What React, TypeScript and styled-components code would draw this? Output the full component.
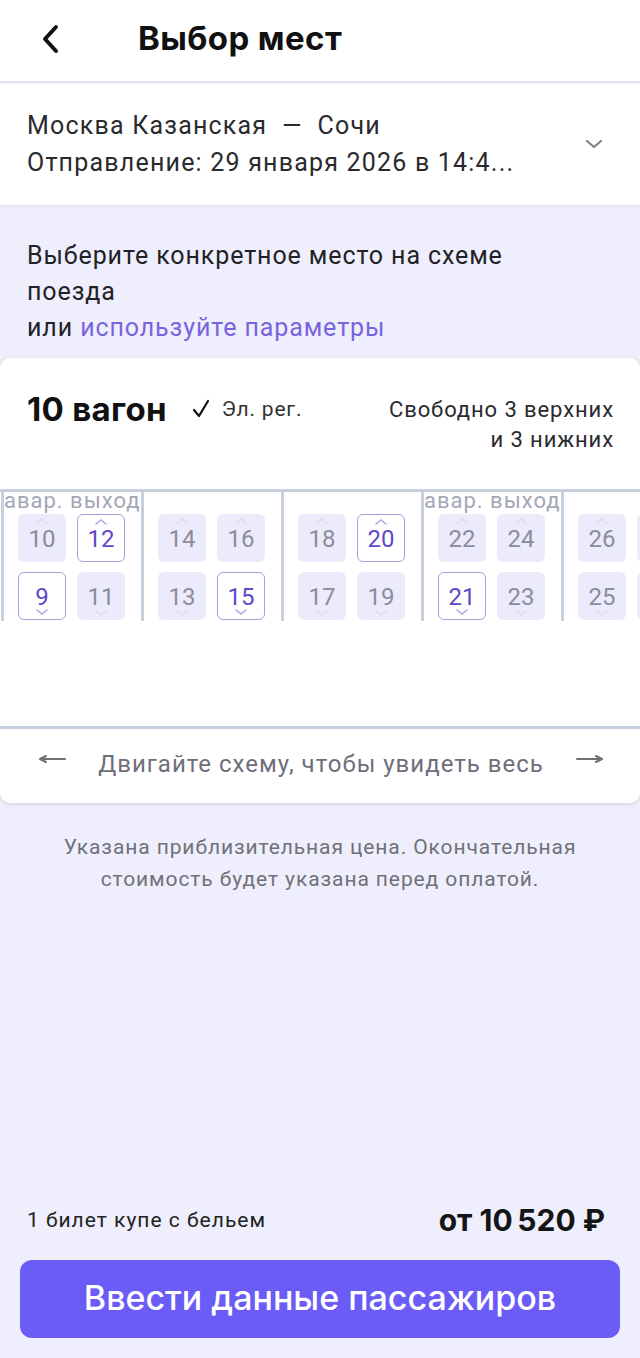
import React from "react";
import styled, { createGlobalStyle } from "styled-components";

const GlobalStyle = createGlobalStyle`
  html, body {
    margin: 0;
    padding: 0;
    background: #eeeefc;
  }
  body {
    font-family: Roboto, "Noto Sans", "Liberation Sans", sans-serif;
    color: #1b1b1f;
  }
  * {
    box-sizing: border-box;
  }
`;

const heading = `Inter, Roboto, "Noto Sans", sans-serif`;

const Page = styled.div`
  width: 640px;
  min-height: 1358px;
  display: flex;
  flex-direction: column;
  background: #eeeefc;
  overflow: hidden;
`;

const Header = styled.header`
  height: 81px;
  display: flex;
  align-items: center;
  background: #fff;
  box-shadow: 0 2px 3px rgba(0, 0, 0, 0.08);
  position: relative;
  z-index: 2;
`;

const BackButton = styled.button`
  width: 110px;
  height: 81px;
  border: 0;
  background: none;
  padding: 0 0 4px 38px;
  display: flex;
  align-items: center;
  color: #111;
`;

const Title = styled.h1`
  margin: 0 0 6px 28px;
  font-family: ${heading};
  font-size: 33px;
  font-weight: 700;
  letter-spacing: 0.4px;
  color: #111;
`;

const RouteBar = styled.div`
  background: #fff;
  margin-top: 2px;
  padding: 24px 36px 24px 27px;
  display: flex;
  align-items: center;
  justify-content: space-between;
  box-shadow: 0 2px 3px rgba(0, 0, 0, 0.05);
`;

const RouteText = styled.div`
  font-size: 25px;
  line-height: 37px;
  letter-spacing: 1.2px;
  color: #2a2a2e;
`;

const Hint = styled.p`
  margin: 0;
  padding: 33px 60px 12px 27px;
  font-size: 25px;
  line-height: 36px;
  letter-spacing: 0.9px;
  color: #222226;
`;

const Link = styled.span`
  color: #7a63e0;
`;

const Card = styled.section`
  background: #fff;
  border-radius: 10px;
  box-shadow: 0 1px 4px rgba(0, 0, 0, 0.12);
  overflow: hidden;
`;

const CardHead = styled.div`
  height: 131px;
  padding: 32px 26px 0 27px;
  display: flex;
  align-items: flex-start;
`;

const WagonNo = styled.div`
  font-family: ${heading};
  font-size: 33px;
  font-weight: 700;
  line-height: 38px;
  letter-spacing: 0.3px;
  color: #111;
`;

const Reg = styled.div`
  margin-left: 24px;
  font-size: 21px;
  line-height: 38px;
  letter-spacing: 0.8px;
  color: #333;
  display: flex;
  align-items: center;
  gap: 11px;
`;

const Free = styled.div`
  margin-left: auto;
  text-align: right;
  font-size: 22px;
  line-height: 30px;
  letter-spacing: 0.9px;
  padding-top: 5px;
  color: #2a2a2e;
`;

const SeatMap = styled.div`
  height: 240px;
  border-top: 3px solid #c6d0dc;
  border-bottom: 3px solid #c6d0dc;
  overflow: hidden;
  display: flex;
  padding-left: 1px;
`;

const Compartment = styled.div`
  flex: 0 0 140px;
  height: 129px;
  border-left: 3px solid #c6d0dc;
  display: flex;
  flex-direction: column;
`;

const ExitLabel = styled.div<{ $show: boolean }>`
  height: 22px;
  font-size: 22px;
  line-height: 17px;
  letter-spacing: 1px;
  color: #a3a7b6;
  white-space: nowrap;
  visibility: ${(p) => (p.$show ? "visible" : "hidden")};
`;

const Seats = styled.div`
  display: grid;
  grid-template-columns: 48px 48px;
  grid-auto-rows: 48px;
  column-gap: 11px;
  row-gap: 10px;
  padding-left: 14px;
`;

const Seat = styled.div<{ $free: boolean }>`
  position: relative;
  display: flex;
  align-items: center;
  justify-content: center;
  border-radius: 6px;
  font-size: 24px;
  padding-top: 2px;
  background: ${(p) => (p.$free ? "#fff" : "#ebebfb")};
  border: ${(p) => (p.$free ? "1.5px solid #a89fdb" : "0")};
  color: ${(p) => (p.$free ? "#5f48cc" : "#8c8ca0")};
`;

const Mark = styled.svg<{ $bottom: boolean; $free: boolean }>`
  position: absolute;
  left: 50%;
  margin-left: -7px;
  ${(p) => (p.$bottom ? "bottom: 3px;" : "top: 3px;")}
  color: ${(p) => (p.$free ? "#b0a6e6" : "#dcdcf2")};
`;

const ScrollHint = styled.div`
  height: 74px;
  display: flex;
  align-items: center;
  justify-content: space-between;
  padding: 0 36px 4px 38px;
  font-size: 24px;
  letter-spacing: 1px;
  color: #6e6e7a;

  svg {
    margin-top: -10px;
  }
`;

const Note = styled.p`
  margin: 0;
  padding: 28px 40px 0;
  text-align: center;
  font-size: 21px;
  line-height: 32px;
  letter-spacing: 0.9px;
  color: #717178;
`;

const Footer = styled.footer`
  margin-top: auto;
  padding: 0 20px 20px;
`;

const PriceRow = styled.div`
  display: flex;
  align-items: center;
  justify-content: space-between;
  padding: 0 15px 0 7px;
  height: 44px;
  margin-bottom: 18px;
`;

const Ticket = styled.span`
  font-size: 21px;
  letter-spacing: 1px;
  color: #222;
`;

const Price = styled.span`
  font-family: ${heading};
  font-size: 30px;
  font-weight: 700;
  color: #151515;
`;

const SubmitButton = styled.button`
  width: 100%;
  height: 78px;
  border: 0;
  border-radius: 12px;
  background: #6b5cf7;
  color: #fff;
  font-family: ${heading};
  font-size: 34px;
  font-weight: 500;
  padding-bottom: 4px;
`;

type SeatInfo = { n: number; free?: boolean };

const compartments: { exit?: boolean; top: SeatInfo[]; bottom: SeatInfo[] }[] = [
  { exit: true, top: [{ n: 10 }, { n: 12, free: true }], bottom: [{ n: 9, free: true }, { n: 11 }] },
  { top: [{ n: 14 }, { n: 16 }], bottom: [{ n: 13 }, { n: 15, free: true }] },
  { top: [{ n: 18 }, { n: 20, free: true }], bottom: [{ n: 17 }, { n: 19 }] },
  { exit: true, top: [{ n: 22 }, { n: 24 }], bottom: [{ n: 21, free: true }, { n: 23 }] },
  { top: [{ n: 26 }, { n: 28 }], bottom: [{ n: 25 }, { n: 27 }] },
];

// seats past the right edge of the screen are only partly visible, so no label is drawn
const visibleEdge = 27;

const SeatBox: React.FC<{ seat: SeatInfo; lower: boolean }> = ({ seat, lower }) => (
  <Seat $free={!!seat.free} aria-label={`Место ${seat.n}`}>
    <Mark $bottom={lower} $free={!!seat.free} width="14" height="8" viewBox="0 0 14 8">
      <path
        d={lower ? "M2 2l5 4 5-4" : "M2 6l5-4 5 4"}
        fill="none"
        stroke="currentColor"
        strokeWidth="1.6"
        strokeLinecap="round"
      />
    </Mark>
    {seat.n < visibleEdge ? seat.n : null}
  </Seat>
);

const App: React.FC = () => {
  return (
    <Page>
      <GlobalStyle />
      <Header>
        <BackButton aria-label="Назад">
          <svg width="24" height="30" viewBox="0 0 24 30">
            <path d="M18 3L7 15l11 12" fill="none" stroke="currentColor" strokeWidth="4" strokeLinecap="round" strokeLinejoin="round" />
          </svg>
        </BackButton>
        <Title>Выбор мест</Title>
      </Header>

      <RouteBar>
        <RouteText>
          Москва Казанская&nbsp; —&nbsp; Сочи
          <br />
          Отправление: 29 января 2026 в 14:4...
        </RouteText>
        <svg width="20" height="12" viewBox="0 0 20 12">
          <path d="M3 3l7 6 7-6" fill="none" stroke="#808088" strokeWidth="2.2" strokeLinecap="round" strokeLinejoin="round" />
        </svg>
      </RouteBar>

      <Hint>
        Выберите конкретное место на схеме поезда
        <br />
        или <Link>используйте параметры</Link>
      </Hint>

      <Card>
        <CardHead>
          <WagonNo>10 вагон</WagonNo>
          <Reg>
            <svg width="20" height="22" viewBox="0 0 20 22">
              <path d="M3 12l5 6L17 3" fill="none" stroke="#111" strokeWidth="2.2" strokeLinecap="round" strokeLinejoin="round" />
            </svg>
            Эл. рег.
          </Reg>
          <Free>
            Свободно 3 верхних
            <br />и 3 нижних
          </Free>
        </CardHead>

        <SeatMap>
          {compartments.map((c, i) => (
            <Compartment key={i}>
              <ExitLabel $show={!!c.exit}>авар. выход</ExitLabel>
              <Seats>
                {c.top.map((s) => (
                  <SeatBox key={s.n} seat={s} lower={false} />
                ))}
                {c.bottom.map((s) => (
                  <SeatBox key={s.n} seat={s} lower />
                ))}
              </Seats>
            </Compartment>
          ))}
        </SeatMap>

        <ScrollHint>
          <svg width="28" height="12" viewBox="0 0 28 12">
            <path d="M27 6H3M8 3L2 6l6 3" fill="none" stroke="#707078" strokeWidth="2" strokeLinecap="round" strokeLinejoin="round" />
          </svg>
          Двигайте схему, чтобы увидеть весь
          <svg width="28" height="12" viewBox="0 0 28 12">
            <path d="M1 6h24M20 3l6 3-6 3" fill="none" stroke="#707078" strokeWidth="2" strokeLinecap="round" strokeLinejoin="round" />
          </svg>
        </ScrollHint>
      </Card>

      <Note>
        Указана приблизительная цена. Окончательная стоимость будет указана перед оплатой.
      </Note>

      <Footer>
        <PriceRow>
          <Ticket>1 билет купе с бельем</Ticket>
          <Price>от 10&thinsp;520 ₽</Price>
        </PriceRow>
        <SubmitButton>Ввести данные пассажиров</SubmitButton>
      </Footer>
    </Page>
  );
};

export default App;
